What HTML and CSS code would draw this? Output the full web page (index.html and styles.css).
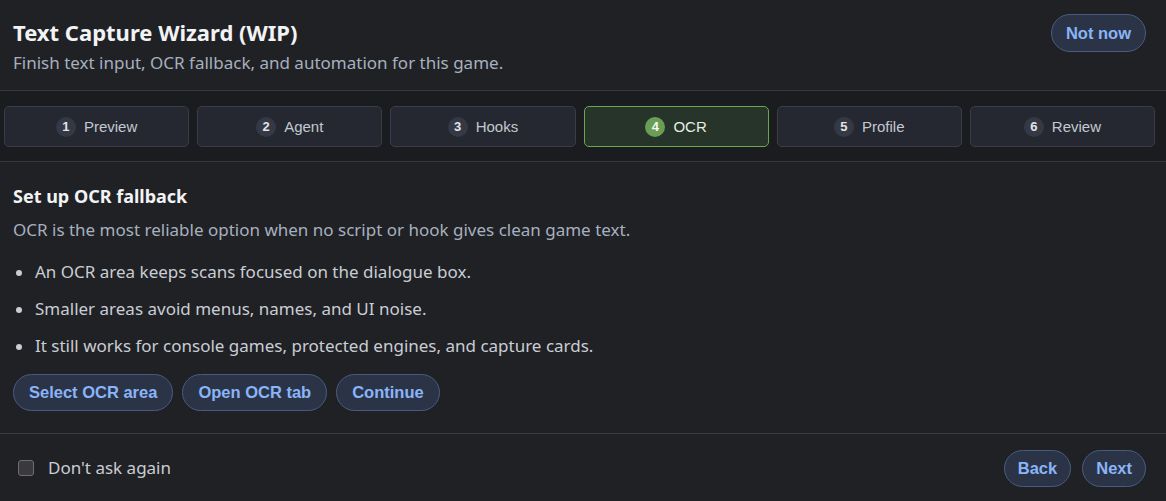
FILE: index.html
```html
<!DOCTYPE html>
<html lang="en">

<head>
    <meta charset="UTF-8">
    <meta name="viewport" content="width=device-width, initial-scale=1.0">
    <title>Text Capture Wizard</title>

    <link rel="stylesheet" href="styles.css">

</head>

<body>
    <header class="top">
        <div class="titles">
            <h1>Text Capture Wizard (WIP)</h1>
            <p class="sub">Finish text input, OCR fallback, and automation for this game.</p>
        </div>
        <button class="pill">Not now</button>
    </header>

    <nav class="steps">
        <div class="step"><span class="num">1</span>Preview</div>
        <div class="step"><span class="num">2</span>Agent</div>
        <div class="step"><span class="num">3</span>Hooks</div>
        <div class="step active"><span class="num">4</span>OCR</div>
        <div class="step"><span class="num">5</span>Profile</div>
        <div class="step"><span class="num">6</span>Review</div>
    </nav>

    <main class="body">
        <h2>Set up OCR fallback</h2>
        <p class="lead">OCR is the most reliable option when no script or hook gives clean game text.</p>
        <ul class="points">
            <li>An OCR area keeps scans focused on the dialogue box.</li>
            <li>Smaller areas avoid menus, names, and UI noise.</li>
            <li>It still works for console games, protected engines, and capture cards.</li>
        </ul>
        <div class="actions">
            <button class="pill">Select OCR area</button>
            <button class="pill">Open OCR tab</button>
            <button class="pill">Continue</button>
        </div>
    </main>

    <footer class="bottom">
        <label class="check"><input type="checkbox"><span>Don't ask again</span></label>
        <div class="nav">
            <button class="pill">Back</button>
            <button class="pill">Next</button>
        </div>
    </footer>
</body>

</html>
```

FILE: styles.css
```css
* {
    box-sizing: border-box;
    margin: 0;
    padding: 0;
}

body {
    font-family: "Noto Sans", "Open Sans", sans-serif;
    background-color: #202125;
    color: #e8eaed;
    width: 1166px;
    height: 501px;
    overflow: hidden;
}

.top {
    display: flex;
    justify-content: space-between;
    align-items: flex-start;
    height: 91px;
    padding: 14px 20px 0 13px;
    border-bottom: 1px solid #3a3b40;
}

h1 {
    font-size: 22px;
    font-weight: 700;
    line-height: 28px;
    margin-top: 4px;
    color: #f1f3f4;
}

.sub {
    font-size: 17px;
    line-height: 24px;
    margin-top: 5px;
    color: #a7b0bf;
}

.pill {
    font-family: "Liberation Sans", Arial, sans-serif;
    font-size: 16.5px;
    font-weight: 700;
    color: #8ab4f8;
    background-color: #2b3447;
    border: 1px solid #4a5b82;
    border-radius: 19px;
    height: 37px;
    padding: 0 15px;
}

.top .pill {
    height: 38px;
    padding: 0 14px;
}

.steps {
    display: grid;
    grid-template-columns: repeat(6, 1fr);
    gap: 8px;
    height: 71px;
    padding: 15px 11px 0 4px;
    background-color: #1b1c1f;
    border-bottom: 1px solid #34363d;
}

.step {
    display: flex;
    justify-content: center;
    align-items: center;
    gap: 8px;
    height: 41px;
    font-family: "Liberation Sans", Arial, sans-serif;
    font-size: 15px;
    color: #c4c8d0;
    background-color: #252830;
    border: 1px solid #393d47;
    border-radius: 5px;
}

.num {
    display: flex;
    justify-content: center;
    align-items: center;
    width: 20px;
    height: 20px;
    border-radius: 50%;
    background-color: #353945;
    color: #e2e4e8;
    font-size: 13px;
    font-weight: 700;
}

.step.active {
    background-color: #26342a;
    border-color: #6aa84f;
    color: #e6efe3;
}

.step.active .num {
    background-color: #6a9e55;
    color: #f4f8f2;
}

.body {
    height: 272px;
    padding: 22px 13px 0;
    border-bottom: 1px solid #3a3b40;
}

h2 {
    font-size: 18px;
    font-weight: 700;
    line-height: 24px;
    color: #f1f3f4;
}

.lead {
    font-size: 17px;
    line-height: 24px;
    margin-top: 10px;
    color: #a7b0bf;
}

.points {
    list-style: none;
    margin-top: 18px;
}

.points li {
    position: relative;
    font-size: 17px;
    line-height: 24px;
    padding-left: 22px;
    margin-bottom: 13px;
    color: #c9cdd4;
}

.points li::before {
    content: "";
    position: absolute;
    left: 3px;
    top: 10px;
    width: 6px;
    height: 6px;
    border-radius: 50%;
    background-color: #c9cdd4;
}

.actions {
    display: flex;
    gap: 9px;
    margin-top: 16px;
}

.bottom {
    display: flex;
    justify-content: space-between;
    align-items: center;
    height: 67px;
    padding: 0 20px 0 18px;
}

.check {
    display: flex;
    align-items: center;
    gap: 14px;
    font-size: 17px;
    color: #c9cdd4;
}

.check input {
    appearance: none;
    width: 16px;
    height: 16px;
    border: 1px solid #6e6e70;
    border-radius: 3px;
    background-color: #3a3a3c;
}

.nav {
    display: flex;
    gap: 11px;
    margin-top: 2px;
}

.nav .pill {
    padding: 0 13px;
}
```
